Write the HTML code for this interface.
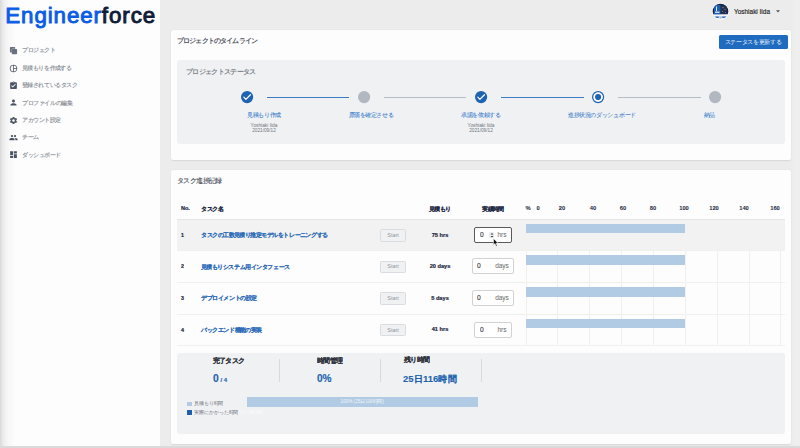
<!DOCTYPE html>
<html lang="ja">
<head>
<meta charset="utf-8">
<style>
*{box-sizing:border-box;margin:0;padding:0}
html,body{width:800px;height:448px;overflow:hidden}
body{position:relative;background:#ececec;font-family:"Liberation Sans",sans-serif;color:#333}
.a{position:absolute}
.t{position:absolute;white-space:nowrap;transform-origin:0 0}
svg{position:absolute;overflow:visible}
</style>
</head>
<body>
<div class="a" style="left:0.00px;top:0.00px;width:160.00px;height:448.00px;background:#fdfdfd;"></div>
<div class="a" style="left:160.00px;top:0.00px;width:2.40px;height:448.00px;background:linear-gradient(to right,#e6e6e6,#eeeeee 40%,#ececec);"></div>
<div class="a" style="left:0.00px;top:0.00px;width:16.00px;height:448.00px;background:linear-gradient(to right,#d8d8d8 0px,#e6e6e6 2px,#f1f1f1 5px,#f8f8f8 9px,#fdfdfd 15.5px);"></div>
<svg style="left:0;top:0" width="160" height="30" viewBox="0 0 160 30"><text x="5.3" y="22.8" font-family="Liberation Sans" font-size="22.3" stroke-width="0.95" textLength="149.8" lengthAdjust="spacing"><tspan fill="#0c5de6" stroke="#0c5de6">Engineer</tspan><tspan fill="#111c38" stroke="#111c38">force</tspan></text></svg>
<svg style="left:9.10px;top:46.10px" width="9.0" height="9.0" viewBox="0 0 24 24"><path d="M4.5 2.5h10c1.1 0 2 .9 2 2v2.5H9c-1.1 0-2 .9-2 2v8.5H4.5c-1.1 0-2-.9-2-2v-11c0-1.1.9-2 2-2zM9.5 8h10c1.1 0 2 .9 2 2v10c0 1.1-.9 2-2 2h-10c-1.1 0-2-.9-2-2V10c0-1.1.9-2 2-2z" fill="#69717f"/></svg>
<div class="t" style="left:21.70px;top:46.40px;font-size:24.00px;line-height:28.80px;color:#92979e;font-weight:bold;transform:scale(0.25);letter-spacing:-2.56px;">プロジェクト</div>
<svg style="left:9.10px;top:63.60px" width="9.0" height="9.0" viewBox="0 0 24 24"><path d="M12 2C6.49 2 2 6.49 2 12s4.49 10 10 10 10-4.49 10-10S17.51 2 12 2zm1 2.07c3.61.45 6.48 3.33 6.93 6.93H13V4.07zM4 12c0-4.06 3.07-7.44 7-7.93v15.87c-3.93-.5-7-3.88-7-7.94zm9 7.93V13h6.93c-.45 3.61-3.32 6.48-6.93 6.93z" fill="#4c5463"/></svg>
<div class="t" style="left:21.70px;top:63.90px;font-size:24.00px;line-height:28.80px;color:#92979e;font-weight:bold;transform:scale(0.25);letter-spacing:-2.56px;">見積もりを作成する</div>
<svg style="left:9.10px;top:80.80px" width="9.0" height="9.0" viewBox="0 0 24 24"><path d="M19 3h-4.18C14.4 1.84 13.3 1 12 1c-1.3 0-2.4.84-2.82 2H5c-1.1 0-2 .9-2 2v14c0 1.1.9 2 2 2h14c1.1 0 2-.9 2-2V5c0-1.1-.9-2-2-2zm-7 0c.55 0 1 .45 1 1s-.45 1-1 1-1-.45-1-1 .45-1 1-1zm-2 14l-4-4 1.41-1.41L10 14.17l6.59-6.59L18 9l-8 8z" fill="#4c5463"/></svg>
<div class="t" style="left:21.70px;top:81.10px;font-size:24.00px;line-height:28.80px;color:#92979e;font-weight:bold;transform:scale(0.25);letter-spacing:-2.56px;">登録されているタスク</div>
<svg style="left:9.10px;top:98.30px" width="9.0" height="9.0" viewBox="0 0 24 24"><path d="M12 12c2.21 0 4-1.79 4-4s-1.79-4-4-4-4 1.79-4 4 1.79 4 4 4zm0 2c-2.67 0-8 1.34-8 4v2h16v-2c0-2.66-5.33-4-8-4z" fill="#4c5463"/></svg>
<div class="t" style="left:21.70px;top:98.60px;font-size:24.00px;line-height:28.80px;color:#92979e;font-weight:bold;transform:scale(0.25);letter-spacing:-2.56px;">プロファイルの編集</div>
<svg style="left:9.10px;top:115.70px" width="9.0" height="9.0" viewBox="0 0 24 24"><path d="M19.14 12.94c.04-.3.06-.61.06-.94 0-.32-.02-.64-.07-.94l2.03-1.58c.18-.14.23-.41.12-.61l-1.92-3.32c-.12-.22-.37-.29-.59-.22l-2.39.96c-.5-.38-1.03-.7-1.62-.94l-.36-2.54c-.04-.24-.24-.41-.48-.41h-3.84c-.24 0-.43.17-.47.41l-.36 2.54c-.59.24-1.13.57-1.62.94l-2.39-.96c-.22-.08-.47 0-.59.22L2.74 8.87c-.12.21-.08.47.12.61l2.03 1.58c-.05.3-.09.63-.09.94s.02.64.07.94l-2.03 1.58c-.18.14-.23.41-.12.61l1.92 3.32c.12.22.37.29.59.22l2.39-.96c.5.38 1.03.7 1.62.94l.36 2.54c.05.24.24.41.48.41h3.84c.24 0 .44-.17.47-.41l.36-2.54c.59-.24 1.13-.56 1.62-.94l2.39.96c.22.08.47 0 .59-.22l1.92-3.32c.12-.22.07-.47-.12-.61l-2.01-1.58zM12 15.6c-1.98 0-3.6-1.62-3.6-3.6s1.62-3.6 3.6-3.6 3.6 1.62 3.6 3.6-1.62 3.6-3.6 3.6z" fill="#4c5463"/></svg>
<div class="t" style="left:21.70px;top:116.00px;font-size:24.00px;line-height:28.80px;color:#92979e;font-weight:bold;transform:scale(0.25);letter-spacing:-2.56px;">アカウント設定</div>
<svg style="left:9.10px;top:133.00px" width="9.0" height="9.0" viewBox="0 0 24 24"><path d="M16 11c1.66 0 2.99-1.34 2.99-3S17.66 5 16 5c-1.66 0-3 1.34-3 3s1.34 3 3 3zm-8 0c1.66 0 2.99-1.34 2.99-3S9.66 5 8 5C6.34 5 5 6.34 5 8s1.34 3 3 3zm0 2c-2.33 0-7 1.17-7 3.5V19h14v-2.5c0-2.33-4.67-3.5-7-3.5zm8 0c-.29 0-.62.02-.97.05 1.16.84 1.97 1.97 1.97 3.45V19h6v-2.5c0-2.33-4.67-3.5-7-3.5z" fill="#4c5463"/></svg>
<div class="t" style="left:21.70px;top:133.30px;font-size:24.00px;line-height:28.80px;color:#92979e;font-weight:bold;transform:scale(0.25);letter-spacing:-2.56px;">チーム</div>
<svg style="left:9.10px;top:150.30px" width="9.0" height="9.0" viewBox="0 0 24 24"><path d="M3 13h8V3H3v10zm0 8h8v-6H3v6zm10 0h8V11h-8v10zm0-18v6h8V3h-8z" fill="#4c5463"/></svg>
<div class="t" style="left:21.70px;top:150.60px;font-size:24.00px;line-height:28.80px;color:#92979e;font-weight:bold;transform:scale(0.25);letter-spacing:-2.56px;">ダッシュボード</div>
<svg style="left:711.5px;top:2.7px" width="17" height="17" viewBox="0 0 34 34">
<defs><clipPath id="av"><circle cx="17" cy="17" r="15.6"/></clipPath></defs>
<circle cx="17" cy="17" r="17" fill="#fafafa"/>
<g clip-path="url(#av)">
<rect x="0" y="0" width="34" height="34" fill="#eef1f5"/>
<rect x="0" y="0" width="34" height="23" fill="#14233f"/>
<rect x="4" y="4" width="13" height="19" fill="#1e5eb0"/>
<rect x="8" y="7" width="2" height="9" fill="#dfe8f5"/>
<rect x="6" y="17" width="9" height="3" fill="#c9d8ee"/>
<rect x="18" y="5" width="12" height="17" fill="#1c3358"/>
<circle cx="22" cy="9" r="1.6" fill="#c0603a"/><circle cx="26" cy="13" r="1.4" fill="#b85a36"/><circle cx="21" cy="17" r="1.3" fill="#a85838"/><circle cx="27" cy="19" r="1.1" fill="#c06040"/>
<rect x="0" y="23" width="34" height="4" fill="#f3f5f8"/>
<path d="M4 27 Q12 33 15 27 Z" fill="#1d62c8"/><path d="M19 27 Q22 33 30 27 Z" fill="#1d62c8"/>
<rect x="15" y="27" width="4" height="4" fill="#aab4c2"/>
</g></svg>
<div class="t" style="left:734.30px;top:7.63px;font-size:25.80px;line-height:30.96px;color:#222;font-weight:normal;transform:scale(0.25);-webkit-text-stroke:0.60px #222;">Yoshiaki Iida</div>
<svg style="left:775.5px;top:10px" width="4" height="3" viewBox="0 0 4 3"><path d="M0 0.3 L4 0.3 L2 2.4 Z" fill="#555"/></svg>
<div class="a" style="left:170.50px;top:30.00px;width:620.60px;height:129.80px;background:#fdfdfd;border-radius:2px;box-shadow:0 0.6px 1.4px rgba(0,0,0,.09)"></div>
<div class="t" style="left:177.20px;top:37.44px;font-size:26.40px;line-height:31.68px;color:#4a4f59;font-weight:bold;transform:scale(0.25);letter-spacing:-2.40px;">プロジェクトのタイムライン</div>
<div class="a" style="left:719.30px;top:34.50px;width:68.70px;height:14.20px;background:#1e6bc0;border-radius:1.5px"></div>
<div class="t" style="left:752.90px;top:38.34px;font-size:24.40px;line-height:29.28px;color:#eaf1fa;font-weight:normal;transform:scale(0.25) translateX(-50%);letter-spacing:-2.00px;">ステータスを更新する</div>
<div class="a" style="left:177.00px;top:59.60px;width:607.80px;height:84.80px;background:#f0f1f3;border-radius:3px"></div>
<div class="t" style="left:185.80px;top:67.92px;font-size:27.20px;line-height:32.64px;color:#7a7f87;font-weight:bold;transform:scale(0.25);letter-spacing:-2.72px;">プロジェクトステータス</div>
<div class="a" style="left:267.00px;top:96.55px;width:82.00px;height:1.30px;background:#3b7cc6;"></div>
<div class="a" style="left:384.00px;top:96.55px;width:82.40px;height:1.30px;background:#b5bcc5;"></div>
<div class="a" style="left:501.00px;top:96.55px;width:82.60px;height:1.30px;background:#3b7cc6;"></div>
<div class="a" style="left:618.00px;top:96.55px;width:82.50px;height:1.30px;background:#b5bcc5;"></div>
<svg style="left:240.90px;top:91.40px" width="12.2" height="12.2" viewBox="0 0 24 24"><circle cx="12" cy="12" r="12" fill="#1f62b2"/><path d="M5.6 12.2 L9.6 16.4 L18.6 7.4" fill="none" stroke="#fff" stroke-width="2.4" stroke-linecap="round" stroke-linejoin="round"/></svg>
<svg style="left:357.90px;top:91.40px" width="12.2" height="12.2" viewBox="0 0 24 24"><circle cx="12" cy="12" r="12" fill="#b1b8c1"/></svg>
<svg style="left:474.90px;top:91.40px" width="12.2" height="12.2" viewBox="0 0 24 24"><circle cx="12" cy="12" r="12" fill="#1f62b2"/><path d="M5.6 12.2 L9.6 16.4 L18.6 7.4" fill="none" stroke="#fff" stroke-width="2.4" stroke-linecap="round" stroke-linejoin="round"/></svg>
<svg style="left:591.90px;top:91.40px" width="12.2" height="12.2" viewBox="0 0 24 24"><circle cx="12" cy="12" r="12" fill="#1f62b2"/><circle cx="12" cy="12" r="9.6" fill="#fff"/><circle cx="12" cy="12" r="6" fill="#1f62b2"/></svg>
<svg style="left:709.30px;top:91.40px" width="12.2" height="12.2" viewBox="0 0 24 24"><circle cx="12" cy="12" r="12" fill="#b1b8c1"/></svg>
<div class="t" style="left:264.20px;top:111.30px;font-size:24.00px;line-height:28.80px;color:#3b80cc;font-weight:normal;transform:scale(0.25) translateX(-50%);-webkit-text-stroke:0.28px #3b80cc;letter-spacing:-2.00px;">見積もり作成</div>
<div class="t" style="left:371.30px;top:111.30px;font-size:24.00px;line-height:28.80px;color:#3b80cc;font-weight:normal;transform:scale(0.25) translateX(-50%);-webkit-text-stroke:0.28px #3b80cc;letter-spacing:-2.00px;">原価を確定させる</div>
<div class="t" style="left:481.20px;top:111.30px;font-size:24.00px;line-height:28.80px;color:#3b80cc;font-weight:normal;transform:scale(0.25) translateX(-50%);-webkit-text-stroke:0.28px #3b80cc;letter-spacing:-2.00px;">承認を依頼する</div>
<div class="t" style="left:601.90px;top:111.30px;font-size:24.00px;line-height:28.80px;color:#3b80cc;font-weight:normal;transform:scale(0.25) translateX(-50%);-webkit-text-stroke:0.28px #3b80cc;letter-spacing:-2.00px;">進捗状況のダッシュボード</div>
<div class="t" style="left:709.30px;top:111.30px;font-size:24.00px;line-height:28.80px;color:#3b80cc;font-weight:normal;transform:scale(0.25) translateX(-50%);-webkit-text-stroke:0.28px #3b80cc;letter-spacing:-2.00px;">納品</div>
<div class="t" style="left:264.20px;top:122.02px;font-size:19.20px;line-height:23.04px;color:#6f757d;font-weight:normal;transform:scale(0.25) translateX(-50%);">Yoshiaki Iida</div>
<div class="t" style="left:264.20px;top:128.38px;font-size:18.80px;line-height:22.56px;color:#6f757d;font-weight:normal;transform:scale(0.25) translateX(-50%);">2021/09/12</div>
<div class="t" style="left:481.20px;top:122.02px;font-size:19.20px;line-height:23.04px;color:#6f757d;font-weight:normal;transform:scale(0.25) translateX(-50%);">Yoshiaki Iida</div>
<div class="t" style="left:481.20px;top:128.38px;font-size:18.80px;line-height:22.56px;color:#6f757d;font-weight:normal;transform:scale(0.25) translateX(-50%);">2021/09/12</div>
<div class="a" style="left:170.50px;top:169.50px;width:620.60px;height:274.50px;background:#fdfdfd;border-radius:2px;box-shadow:0 0.6px 1.4px rgba(0,0,0,.09)"></div>
<div class="t" style="left:177.40px;top:176.78px;font-size:26.80px;line-height:32.16px;color:#4c515b;font-weight:normal;transform:scale(0.25);-webkit-text-stroke:0.40px #4c515b;letter-spacing:-2.20px;">タスク進捗記録</div>
<div class="t" style="left:181.00px;top:205.20px;font-size:22.00px;line-height:26.40px;color:#1f2a44;font-weight:bold;transform:scale(0.25);-webkit-text-stroke:0.80px #1f2a44;">No.</div>
<div class="t" style="left:200.80px;top:204.90px;font-size:24.00px;line-height:28.80px;color:#1f2a44;font-weight:bold;transform:scale(0.25);-webkit-text-stroke:0.48px #1f2a44;letter-spacing:-2.20px;">タスク名</div>
<div class="t" style="left:439.60px;top:204.90px;font-size:24.00px;line-height:28.80px;color:#1f2a44;font-weight:bold;transform:scale(0.25) translateX(-50%);-webkit-text-stroke:0.48px #1f2a44;letter-spacing:-2.20px;">見積もり</div>
<div class="t" style="left:493.20px;top:204.90px;font-size:24.00px;line-height:28.80px;color:#1f2a44;font-weight:bold;transform:scale(0.25) translateX(-50%);-webkit-text-stroke:0.48px #1f2a44;letter-spacing:-2.20px;">実績時間</div>
<div class="t" style="left:528.00px;top:205.32px;font-size:23.20px;line-height:27.84px;color:#1f2a44;font-weight:bold;transform:scale(0.25) translateX(-50%);-webkit-text-stroke:0.20px #1f2a44;">%</div>
<div class="t" style="left:537.50px;top:205.32px;font-size:23.20px;line-height:27.84px;color:#1f2a44;font-weight:bold;transform:scale(0.25) translateX(-50%);-webkit-text-stroke:0.20px #1f2a44;">0</div>
<div class="t" style="left:562.00px;top:205.32px;font-size:23.20px;line-height:27.84px;color:#1f2a44;font-weight:bold;transform:scale(0.25) translateX(-50%);-webkit-text-stroke:0.20px #1f2a44;">20</div>
<div class="t" style="left:592.80px;top:205.32px;font-size:23.20px;line-height:27.84px;color:#1f2a44;font-weight:bold;transform:scale(0.25) translateX(-50%);-webkit-text-stroke:0.20px #1f2a44;">40</div>
<div class="t" style="left:623.30px;top:205.32px;font-size:23.20px;line-height:27.84px;color:#1f2a44;font-weight:bold;transform:scale(0.25) translateX(-50%);-webkit-text-stroke:0.20px #1f2a44;">60</div>
<div class="t" style="left:653.00px;top:205.32px;font-size:23.20px;line-height:27.84px;color:#1f2a44;font-weight:bold;transform:scale(0.25) translateX(-50%);-webkit-text-stroke:0.20px #1f2a44;">80</div>
<div class="t" style="left:683.80px;top:205.32px;font-size:23.20px;line-height:27.84px;color:#1f2a44;font-weight:bold;transform:scale(0.25) translateX(-50%);-webkit-text-stroke:0.20px #1f2a44;">100</div>
<div class="t" style="left:714.20px;top:205.32px;font-size:23.20px;line-height:27.84px;color:#1f2a44;font-weight:bold;transform:scale(0.25) translateX(-50%);-webkit-text-stroke:0.20px #1f2a44;">120</div>
<div class="t" style="left:744.40px;top:205.32px;font-size:23.20px;line-height:27.84px;color:#1f2a44;font-weight:bold;transform:scale(0.25) translateX(-50%);-webkit-text-stroke:0.20px #1f2a44;">140</div>
<div class="t" style="left:774.80px;top:205.32px;font-size:23.20px;line-height:27.84px;color:#1f2a44;font-weight:bold;transform:scale(0.25) translateX(-50%);-webkit-text-stroke:0.20px #1f2a44;">160</div>
<div class="a" style="left:177.00px;top:218.90px;width:608.00px;height:31.40px;background:#f2f2f2;"></div>
<div class="a" style="left:177.00px;top:218.60px;width:608.00px;height:0.70px;background:#e6e6e6;"></div>
<div class="a" style="left:177.00px;top:250.30px;width:608.00px;height:0.70px;background:#f0f0f0;"></div>
<div class="a" style="left:177.00px;top:281.90px;width:608.00px;height:0.70px;background:#f0f0f0;"></div>
<div class="a" style="left:177.00px;top:313.50px;width:608.00px;height:0.70px;background:#f0f0f0;"></div>
<div class="a" style="left:177.00px;top:345.10px;width:608.00px;height:0.70px;background:#f0f0f0;"></div>
<div class="a" style="left:525.60px;top:251.20px;width:0.60px;height:94.50px;background:#f0f0f0;"></div>
<div class="a" style="left:557.45px;top:251.20px;width:0.60px;height:94.50px;background:#f0f0f0;"></div>
<div class="a" style="left:589.30px;top:251.20px;width:0.60px;height:94.50px;background:#f0f0f0;"></div>
<div class="a" style="left:621.15px;top:251.20px;width:0.60px;height:94.50px;background:#f0f0f0;"></div>
<div class="a" style="left:653.00px;top:251.20px;width:0.60px;height:94.50px;background:#f0f0f0;"></div>
<div class="a" style="left:684.85px;top:251.20px;width:0.60px;height:94.50px;background:#f0f0f0;"></div>
<div class="a" style="left:716.70px;top:251.20px;width:0.60px;height:94.50px;background:#f0f0f0;"></div>
<div class="a" style="left:748.55px;top:251.20px;width:0.60px;height:94.50px;background:#f0f0f0;"></div>
<div class="a" style="left:780.40px;top:251.20px;width:0.60px;height:94.50px;background:#f0f0f0;"></div>
<div class="t" style="left:181.20px;top:231.82px;font-size:21.20px;line-height:25.44px;color:#1f2a44;font-weight:bold;transform:scale(0.25);-webkit-text-stroke:0.80px #1f2a44;">1</div>
<div class="t" style="left:200.90px;top:230.90px;font-size:24.00px;line-height:28.80px;color:#2d6cb8;font-weight:bold;transform:scale(0.25);-webkit-text-stroke:0.40px #2d6cb8;letter-spacing:-2.64px;">タスクの工数見積り推定モデルをトレーニングする</div>
<div class="a" style="left:380.30px;top:229.00px;width:26.00px;height:12.50px;background:#eff1f3;border:0.6px solid #d9dce0;border-radius:1.5px"></div>
<div class="t" style="left:393.30px;top:231.73px;font-size:21.80px;line-height:26.16px;color:#8f959c;font-weight:normal;transform:scale(0.25) translateX(-50%);">Start</div>
<div class="t" style="left:439.70px;top:231.61px;font-size:22.60px;line-height:27.12px;color:#1f2a44;font-weight:bold;transform:scale(0.25) translateX(-50%);-webkit-text-stroke:0.80px #1f2a44;">75 hrs</div>
<div class="a" style="left:526.00px;top:223.70px;width:159.20px;height:9.70px;background:#b0cbe3;"></div>
<div class="t" style="left:181.20px;top:263.42px;font-size:21.20px;line-height:25.44px;color:#1f2a44;font-weight:bold;transform:scale(0.25);-webkit-text-stroke:0.80px #1f2a44;">2</div>
<div class="t" style="left:200.90px;top:262.50px;font-size:24.00px;line-height:28.80px;color:#2d6cb8;font-weight:bold;transform:scale(0.25);-webkit-text-stroke:0.40px #2d6cb8;letter-spacing:-2.64px;">見積もりシステム用インタフェース</div>
<div class="a" style="left:380.30px;top:260.60px;width:26.00px;height:12.50px;background:#eff1f3;border:0.6px solid #d9dce0;border-radius:1.5px"></div>
<div class="t" style="left:393.30px;top:263.33px;font-size:21.80px;line-height:26.16px;color:#8f959c;font-weight:normal;transform:scale(0.25) translateX(-50%);">Start</div>
<div class="t" style="left:439.70px;top:263.21px;font-size:22.60px;line-height:27.12px;color:#1f2a44;font-weight:bold;transform:scale(0.25) translateX(-50%);-webkit-text-stroke:0.80px #1f2a44;">20 days</div>
<div class="a" style="left:526.00px;top:255.30px;width:159.20px;height:9.70px;background:#b0cbe3;"></div>
<div class="t" style="left:181.20px;top:295.02px;font-size:21.20px;line-height:25.44px;color:#1f2a44;font-weight:bold;transform:scale(0.25);-webkit-text-stroke:0.80px #1f2a44;">3</div>
<div class="t" style="left:200.90px;top:294.10px;font-size:24.00px;line-height:28.80px;color:#2d6cb8;font-weight:bold;transform:scale(0.25);-webkit-text-stroke:0.40px #2d6cb8;letter-spacing:-2.64px;">デプロイメントの設定</div>
<div class="a" style="left:380.30px;top:292.20px;width:26.00px;height:12.50px;background:#eff1f3;border:0.6px solid #d9dce0;border-radius:1.5px"></div>
<div class="t" style="left:393.30px;top:294.93px;font-size:21.80px;line-height:26.16px;color:#8f959c;font-weight:normal;transform:scale(0.25) translateX(-50%);">Start</div>
<div class="t" style="left:439.70px;top:294.81px;font-size:22.60px;line-height:27.12px;color:#1f2a44;font-weight:bold;transform:scale(0.25) translateX(-50%);-webkit-text-stroke:0.80px #1f2a44;">5 days</div>
<div class="a" style="left:526.00px;top:286.90px;width:159.20px;height:9.70px;background:#b0cbe3;"></div>
<div class="t" style="left:181.20px;top:326.62px;font-size:21.20px;line-height:25.44px;color:#1f2a44;font-weight:bold;transform:scale(0.25);-webkit-text-stroke:0.80px #1f2a44;">4</div>
<div class="t" style="left:200.90px;top:325.70px;font-size:24.00px;line-height:28.80px;color:#2d6cb8;font-weight:bold;transform:scale(0.25);-webkit-text-stroke:0.40px #2d6cb8;letter-spacing:-2.64px;">バックエンド機能の実装</div>
<div class="a" style="left:380.30px;top:323.80px;width:26.00px;height:12.50px;background:#eff1f3;border:0.6px solid #d9dce0;border-radius:1.5px"></div>
<div class="t" style="left:393.30px;top:326.53px;font-size:21.80px;line-height:26.16px;color:#8f959c;font-weight:normal;transform:scale(0.25) translateX(-50%);">Start</div>
<div class="t" style="left:439.70px;top:326.41px;font-size:22.60px;line-height:27.12px;color:#1f2a44;font-weight:bold;transform:scale(0.25) translateX(-50%);-webkit-text-stroke:0.80px #1f2a44;">41 hrs</div>
<div class="a" style="left:526.00px;top:318.50px;width:159.20px;height:9.70px;background:#b0cbe3;"></div>
<div class="a" style="left:474.10px;top:226.60px;width:37.70px;height:16.00px;background:#fff;border:0.8px solid #5a5a5a;border-radius:2px"></div>
<div class="t" style="left:479.50px;top:230.84px;font-size:26.40px;line-height:31.68px;color:#333;font-weight:normal;transform:scale(0.25);-webkit-text-stroke:0.48px #333;">0</div>
<div class="t" style="left:502.30px;top:230.70px;font-size:26.00px;line-height:31.20px;color:#666;font-weight:normal;transform:scale(0.25) translateX(-50%);">hrs</div>
<div class="a" style="left:472.30px;top:258.10px;width:42.10px;height:16.30px;background:#fff;border:0.7px solid #d2d2d2;border-radius:2px"></div>
<div class="t" style="left:477.20px;top:262.49px;font-size:26.40px;line-height:31.68px;color:#333;font-weight:normal;transform:scale(0.25);-webkit-text-stroke:0.48px #333;">0</div>
<div class="t" style="left:501.90px;top:262.35px;font-size:26.00px;line-height:31.20px;color:#666;font-weight:normal;transform:scale(0.25) translateX(-50%);">days</div>
<div class="a" style="left:472.30px;top:289.70px;width:42.10px;height:16.30px;background:#fff;border:0.7px solid #d2d2d2;border-radius:2px"></div>
<div class="t" style="left:477.20px;top:294.09px;font-size:26.40px;line-height:31.68px;color:#333;font-weight:normal;transform:scale(0.25);-webkit-text-stroke:0.48px #333;">0</div>
<div class="t" style="left:501.90px;top:293.95px;font-size:26.00px;line-height:31.20px;color:#666;font-weight:normal;transform:scale(0.25) translateX(-50%);">days</div>
<div class="a" style="left:474.00px;top:321.50px;width:38.00px;height:16.50px;background:#fff;border:0.7px solid #d2d2d2;border-radius:2px"></div>
<div class="t" style="left:479.50px;top:325.99px;font-size:26.40px;line-height:31.68px;color:#333;font-weight:normal;transform:scale(0.25);-webkit-text-stroke:0.48px #333;">0</div>
<div class="t" style="left:502.30px;top:325.85px;font-size:26.00px;line-height:31.20px;color:#666;font-weight:normal;transform:scale(0.25) translateX(-50%);">hrs</div>
<div class="a" style="left:488.80px;top:231.80px;width:5.60px;height:5.80px;background:#eceef0;"></div>
<svg style="left:489.6px;top:231.6px" width="4" height="7" viewBox="0 0 4 7"><path d="M0.6 2.6 L2 1.0 L3.4 2.6 Z M0.6 4.0 L2 5.6 L3.4 4.0 Z" fill="#333"/></svg>
<svg style="left:492.8px;top:237.6px" width="6" height="9" viewBox="0 0 6 9"><path d="M0.5 0.5 L0.5 7 L2 5.6 L3.2 8.2 L4.2 7.7 L3 5.2 L5 5.1 Z" fill="#111" stroke="#fff" stroke-width="0.5"/></svg>
<div class="a" style="left:177.00px;top:353.20px;width:607.80px;height:81.30px;background:#f0f1f3;border-radius:3px"></div>
<div class="t" style="left:213.10px;top:356.78px;font-size:26.80px;line-height:32.16px;color:#2a2f38;font-weight:bold;transform:scale(0.25);-webkit-text-stroke:0.48px #2a2f38;letter-spacing:-2.40px;">完了タスク</div>
<div class="t" style="left:213.0px;top:372.0px;font-size:41.20px;line-height:48.00px;color:#2064b0;font-weight:bold;transform:scale(0.25);-webkit-text-stroke:0.60px #2064b0">0<span style="font-size:24.00px"> / 4</span></div>
<div class="a" style="left:279.30px;top:359.00px;width:0.70px;height:23.00px;background:#d6d9dd;"></div>
<div class="t" style="left:317.10px;top:356.78px;font-size:26.80px;line-height:32.16px;color:#2a2f38;font-weight:bold;transform:scale(0.25);-webkit-text-stroke:0.48px #2a2f38;letter-spacing:-2.00px;">時間管理</div>
<div class="t" style="left:317.30px;top:372.14px;font-size:40.40px;line-height:48.48px;color:#2064b0;font-weight:bold;transform:scale(0.25);-webkit-text-stroke:0.60px #2064b0;">0%</div>
<div class="a" style="left:380.30px;top:359.00px;width:0.70px;height:23.00px;background:#d6d9dd;"></div>
<div class="t" style="left:403.50px;top:356.28px;font-size:26.80px;line-height:32.16px;color:#2a2f38;font-weight:bold;transform:scale(0.25);-webkit-text-stroke:0.48px #2a2f38;letter-spacing:-2.00px;">残り時間</div>
<div class="t" style="left:403.30px;top:373.13px;font-size:37.80px;line-height:45.36px;color:#2064b0;font-weight:bold;transform:scale(0.25);-webkit-text-stroke:0.40px #2064b0;">25日116時間</div>
<div class="a" style="left:481.00px;top:359.00px;width:0.70px;height:23.00px;background:#d6d9dd;"></div>
<div class="a" style="left:187.00px;top:401.50px;width:4.80px;height:4.80px;background:#b0cbe3;"></div>
<div class="t" style="left:193.80px;top:400.38px;font-size:20.80px;line-height:24.96px;color:#6b7079;font-weight:normal;transform:scale(0.25);letter-spacing:-2.00px;">見積もり時間</div>
<div class="a" style="left:187.00px;top:410.20px;width:4.80px;height:4.80px;background:#1d5fae;"></div>
<div class="t" style="left:193.80px;top:409.48px;font-size:20.80px;line-height:24.96px;color:#6b7079;font-weight:normal;transform:scale(0.25);letter-spacing:-2.00px;">実際にかかった時間</div>
<div class="t" style="left:238.50px;top:409.78px;font-size:18.80px;line-height:22.56px;color:#fbfbfb;font-weight:normal;transform:scale(0.25);">0% (0時間)</div>
<div class="a" style="left:247.00px;top:397.00px;width:230.50px;height:10.00px;background:#b0cbe3;"></div>
<div class="t" style="left:362.00px;top:399.18px;font-size:18.80px;line-height:22.56px;color:#f2f6fb;font-weight:normal;transform:scale(0.25) translateX(-50%);">100% (25日116時間)</div>
<div class="a" style="left:792.60px;top:0.00px;width:7.40px;height:446.00px;background:#eeeeee;"></div>
<div class="a" style="left:0.00px;top:445.80px;width:800.00px;height:2.20px;background:#dadada;"></div>
</body></html>
